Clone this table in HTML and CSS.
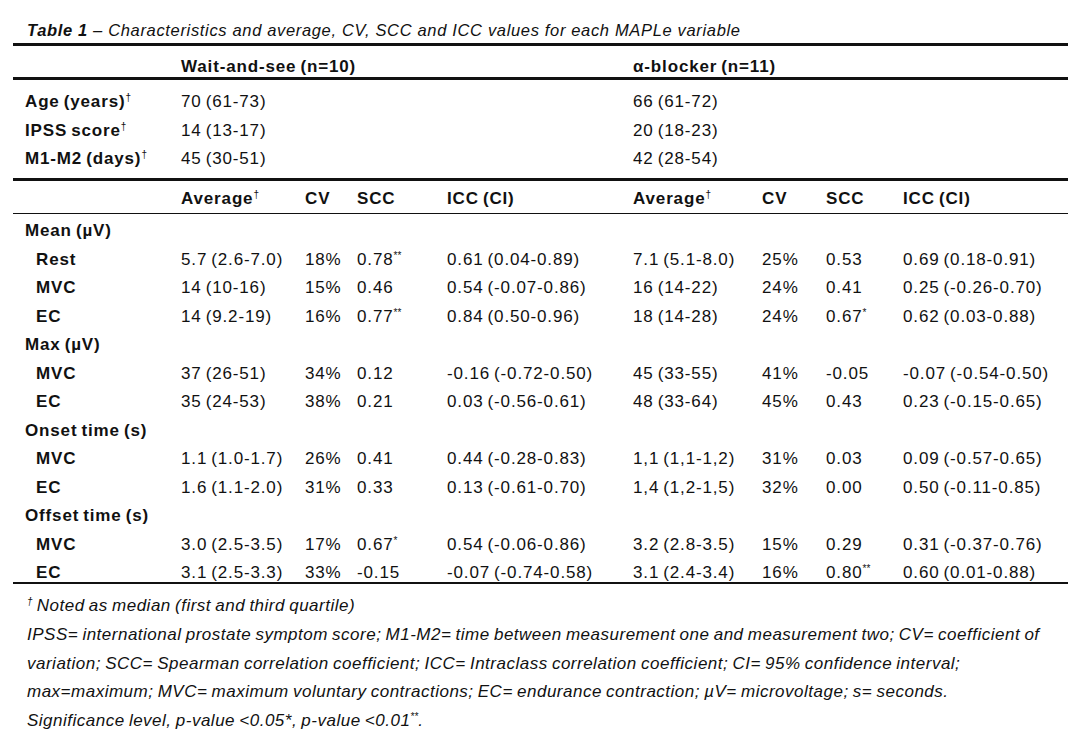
FILE: index.html
```html
<!DOCTYPE html>
<html lang="en">
<head>
<meta charset="utf-8">
<title>Table 1 – MAPLe variables</title>
<link rel="stylesheet" href="styles.css">
</head>
<body>
<div class="page">
  <p class="caption"><b>Table 1</b> – Characteristics and average, CV, SCC and ICC values for each MAPLe variable</p>
  <table class="data">
    <colgroup>
      <col class="c-label">
      <col class="c-avg1">
      <col class="c-cv1">
      <col class="c-scc1">
      <col class="c-icc1">
      <col class="c-avg2">
      <col class="c-cv2">
      <col class="c-scc2">
      <col class="c-icc2">
    </colgroup>
    <thead>
      <tr class="group-row">
        <th></th>
        <th colspan="4">Wait-and-see (n=10)</th>
        <th colspan="4">α-blocker (n=11)</th>
      </tr>
    </thead>
    <tbody class="chars">
      <tr><th class="lbl">Age (years)<sup class="dag">†</sup></th><td colspan="4">70 (61-73)</td><td colspan="4">66 (61-72)</td></tr>
      <tr><th class="lbl">IPSS score<sup class="dag">†</sup></th><td colspan="4">14 (13-17)</td><td colspan="4">20 (18-23)</td></tr>
      <tr><th class="lbl">M1-M2 (days)<sup class="dag">†</sup></th><td colspan="4">45 (30-51)</td><td colspan="4">42 (28-54)</td></tr>
    </tbody>
    <tbody class="subhead">
      <tr>
        <th></th>
        <th>Average<sup class="dag">†</sup></th><th>CV</th><th>SCC</th><th>ICC (CI)</th>
        <th>Average<sup class="dag">†</sup></th><th>CV</th><th>SCC</th><th>ICC (CI)</th>
      </tr>
    </tbody>
    <tbody class="measures">
      <tr><th class="lbl">Mean (µV)</th><td colspan="8"></td></tr>
      <tr><th class="sub">Rest</th><td>5.7 (2.6-7.0)</td><td>18%</td><td>0.78<sup class="sig">**</sup></td><td>0.61 (0.04-0.89)</td><td>7.1 (5.1-8.0)</td><td>25%</td><td>0.53</td><td>0.69 (0.18-0.91)</td></tr>
      <tr><th class="sub">MVC</th><td>14 (10-16)</td><td>15%</td><td>0.46</td><td>0.54 (-0.07-0.86)</td><td>16 (14-22)</td><td>24%</td><td>0.41</td><td>0.25 (-0.26-0.70)</td></tr>
      <tr><th class="sub">EC</th><td>14 (9.2-19)</td><td>16%</td><td>0.77<sup class="sig">**</sup></td><td>0.84 (0.50-0.96)</td><td>18 (14-28)</td><td>24%</td><td>0.67<sup class="sig">*</sup></td><td>0.62 (0.03-0.88)</td></tr>
      <tr><th class="lbl">Max (µV)</th><td colspan="8"></td></tr>
      <tr><th class="sub">MVC</th><td>37 (26-51)</td><td>34%</td><td>0.12</td><td>-0.16 (-0.72-0.50)</td><td>45 (33-55)</td><td>41%</td><td>-0.05</td><td>-0.07 (-0.54-0.50)</td></tr>
      <tr><th class="sub">EC</th><td>35 (24-53)</td><td>38%</td><td>0.21</td><td>0.03 (-0.56-0.61)</td><td>48 (33-64)</td><td>45%</td><td>0.43</td><td>0.23 (-0.15-0.65)</td></tr>
      <tr><th class="lbl">Onset time (s)</th><td colspan="8"></td></tr>
      <tr><th class="sub">MVC</th><td>1.1 (1.0-1.7)</td><td>26%</td><td>0.41</td><td>0.44 (-0.28-0.83)</td><td>1,1 (1,1-1,2)</td><td>31%</td><td>0.03</td><td>0.09 (-0.57-0.65)</td></tr>
      <tr><th class="sub">EC</th><td>1.6 (1.1-2.0)</td><td>31%</td><td>0.33</td><td>0.13 (-0.61-0.70)</td><td>1,4 (1,2-1,5)</td><td>32%</td><td>0.00</td><td>0.50 (-0.11-0.85)</td></tr>
      <tr><th class="lbl">Offset time (s)</th><td colspan="8"></td></tr>
      <tr><th class="sub">MVC</th><td>3.0 (2.5-3.5)</td><td>17%</td><td>0.67<sup class="sig">*</sup></td><td>0.54 (-0.06-0.86)</td><td>3.2 (2.8-3.5)</td><td>15%</td><td>0.29</td><td>0.31 (-0.37-0.76)</td></tr>
      <tr><th class="sub">EC</th><td>3.1 (2.5-3.3)</td><td>33%</td><td>-0.15</td><td>-0.07 (-0.74-0.58)</td><td>3.1 (2.4-3.4)</td><td>16%</td><td>0.80<sup class="sig">**</sup></td><td>0.60 (0.01-0.88)</td></tr>
    </tbody>
  </table>
  <div class="notes">
    <p><sup class="dag">†</sup> Noted as median (first and third quartile)</p>
    <p>IPSS= international prostate symptom score; M1-M2= time between measurement one and measurement two; CV= coefficient of<br>variation; SCC= Spearman correlation coefficient; ICC= Intraclass correlation coefficient; CI= 95% confidence interval;<br>max=maximum; MVC= maximum voluntary contractions; EC= endurance contraction; µV= microvoltage; s= seconds.<br>Significance level, p-value &lt;0.05*, p-value &lt;0.01<sup class="sig">**</sup>.</p>
  </div>
</div>
</body>
</html>
```

FILE: styles.css
```css
html, body {
  margin: 0;
  padding: 0;
  background: #ffffff;
}

body {
  font-family: "Liberation Sans", Arial, sans-serif;
  color: #111111;
  font-size: 17px;
}

.page {
  padding: 0 12px 0 13px;
}

.caption {
  margin: 0 0 2px;
  padding: 19px 0 0 14px;
  font-size: 16.5px;
  line-height: 22px;
  font-style: italic;
  letter-spacing: 0.66px;
}

.caption b {
  font-weight: bold;
}

.data {
  width: 100%;
  border-collapse: collapse;
  table-layout: fixed;
  border-top: 3px solid #111;
  letter-spacing: 0.85px;
  word-spacing: -1.5px;
}

.c-label { width: 168px; }
.c-avg1 { width: 124px; }
.c-cv1 { width: 52px; }
.c-scc1 { width: 90px; }
.c-icc1 { width: 186px; }
.c-avg2 { width: 129px; }
.c-cv2 { width: 64px; }
.c-scc2 { width: 77px; }
.c-icc2 { width: auto; }

.data th,
.data td {
  padding: 0;
  text-align: left;
  vertical-align: baseline;
  line-height: 28.6px;
  white-space: nowrap;
}

.data th {
  font-weight: bold;
}

.data td {
  font-weight: normal;
}

.group-row th {
  padding-top: 10px;
  line-height: 21px;
  border-bottom: 3px solid #111;
}

.chars tr:first-child > * {
  padding-top: 8px;
}

.chars tr:last-child > * {
  padding-bottom: 4px;
}

.chars {
  border-bottom: 3px solid #111;
}

.subhead th {
  padding-top: 5px;
  padding-bottom: 0.5px;
  line-height: 26.6px;
  border-bottom: 1.5px solid #111;
}

.measures th,
.measures td {
  padding-top: 5.5px;
  line-height: 23px;
}

.measures tr:last-child > th,
.measures tr:last-child > td {
  padding-top: 7.5px;
  line-height: 19px;
}

.measures {
  border-bottom: 2px solid #111;
}

.lbl {
  padding-left: 12px !important;
}

.sub {
  padding-left: 23px !important;
}

.dag {
  font-size: 10px;
  font-weight: normal;
  vertical-align: 6px;
  line-height: 0;
  letter-spacing: 0;
}

.sig {
  font-size: 10px;
  vertical-align: 6px;
  line-height: 0;
  letter-spacing: 0;
}

.notes {
  padding: 8px 0 0 14px;
  font-style: italic;
  letter-spacing: 0.5px;
  word-spacing: -1px;
}

.notes p {
  margin: 0;
  line-height: 28.7px;
}
```
